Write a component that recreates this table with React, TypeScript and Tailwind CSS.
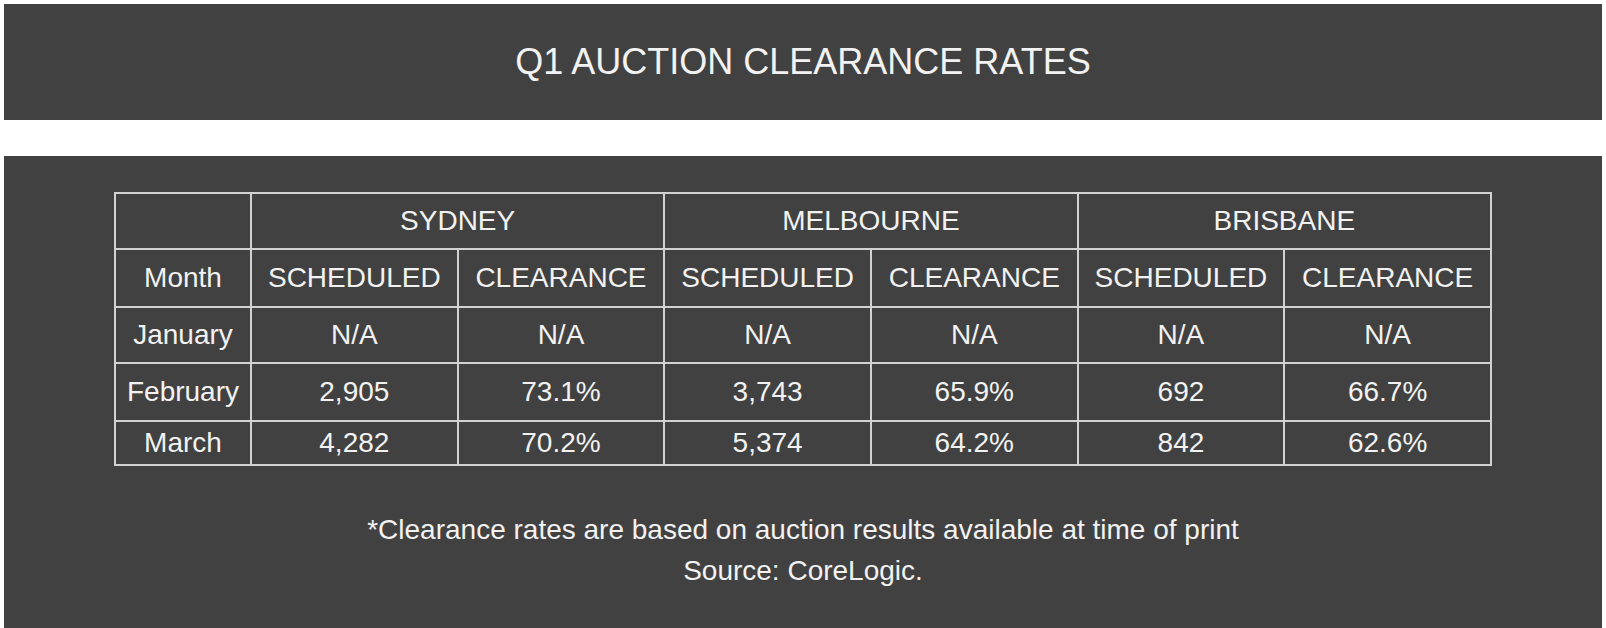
import React from "react";

const cities = ["SYDNEY", "MELBOURNE", "BRISBANE"];

const rows = [
  { month: "January", values: ["N/A", "N/A", "N/A", "N/A", "N/A", "N/A"], h: "h-[56px]" },
  { month: "February", values: ["2,905", "73.1%", "3,743", "65.9%", "692", "66.7%"], h: "h-[58px]" },
  { month: "March", values: ["4,282", "70.2%", "5,374", "64.2%", "842", "62.6%"], h: "h-[44px]" },
];

const cell = "border border-[#d2d2d2] text-center align-middle p-0 font-normal";

export default function App() {
  return (
    <div
      className="min-h-screen bg-white p-[4px] text-[#f2f2f2]"
      style={{ fontFamily: '"Liberation Sans", Arial, sans-serif' }}
    >
      {/* Header */}
      <div className="h-[116px] bg-[#414141] flex items-center justify-center">
        <h1 className="text-[36px] leading-[42px] font-normal">Q1 AUCTION CLEARANCE RATES</h1>
      </div>

      {/* Table panel */}
      <div className="mt-[36px] bg-[#414141] px-[110px] pt-[36px] pb-[44px]">
        <table className="w-full table-fixed border-separate border-spacing-0 border border-[#d2d2d2] text-[28px] leading-[32px]">
          <colgroup>
            <col className="w-[136px]" />
            <col />
            <col />
            <col />
            <col />
            <col />
            <col />
          </colgroup>
          <thead>
            <tr className="h-[56px]">
              <th className={cell}></th>
              {cities.map((c) => (
                <th key={c} colSpan={2} className={cell}>
                  {c}
                </th>
              ))}
            </tr>
            <tr className="h-[58px]">
              <th className={cell}>Month</th>
              {cities.map((c) => (
                <React.Fragment key={c}>
                  <th className={cell}>SCHEDULED</th>
                  <th className={cell}>CLEARANCE</th>
                </React.Fragment>
              ))}
            </tr>
          </thead>
          <tbody>
            {rows.map((r) => (
              <tr key={r.month} className={r.h}>
                <td className={cell}>{r.month}</td>
                {r.values.map((v, j) => (
                  <td key={j} className={cell}>
                    {v}
                  </td>
                ))}
              </tr>
            ))}
          </tbody>
        </table>

        <div className="mt-[43px] text-center text-[28px] leading-[41px]">
          <p>*Clearance rates are based on auction results available at time of print</p>
          <p>Source: CoreLogic.</p>
        </div>
      </div>
    </div>
  );
}
